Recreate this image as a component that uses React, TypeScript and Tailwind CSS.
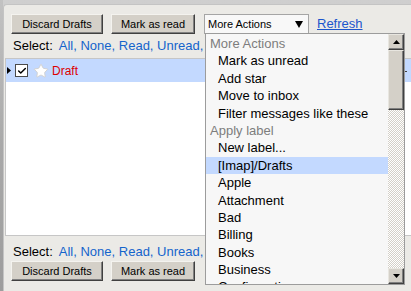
import { Check, Star } from "lucide-react";

const btn =
  "h-[20px] bg-[#d4d0c8] border border-t-[#f4f3ef] border-l-[#f4f3ef] border-b-[#404040] border-r-[#404040] shadow-[inset_-1px_-1px_0_#808080] text-[11px] text-black leading-[18px] flex items-center justify-center";

const links = ["All", "None", "Read", "Unread"];

const menu: { label: string; kind: "head" | "item" | "sel" }[] = [
  { label: "More Actions", kind: "head" },
  { label: "Mark as unread", kind: "item" },
  { label: "Add star", kind: "item" },
  { label: "Move to inbox", kind: "item" },
  { label: "Filter messages like these", kind: "item" },
  { label: "Apply label", kind: "head" },
  { label: "New label...", kind: "item" },
  { label: "[Imap]/Drafts", kind: "sel" },
  { label: "Apple", kind: "item" },
  { label: "Attachment", kind: "item" },
  { label: "Bad", kind: "item" },
  { label: "Billing", kind: "item" },
  { label: "Books", kind: "item" },
  { label: "Business", kind: "item" },
  { label: "Configuration", kind: "item" },
];

function Buttons() {
  return (
    <div className="flex gap-[8px] ml-[7px]">
      <button className={`${btn} w-[92px]`}>Discard Drafts</button>
      <button className={`${btn} w-[84px]`}>Mark as read</button>
    </div>
  );
}

function SelectLine({ pad }: { pad: string }) {
  return (
    <div className={`h-[24px] ${pad} ml-[9px] text-[13px] leading-[15px] text-black whitespace-nowrap`}>
      Select:
      <span className="ml-[6px]" />
      {links.map((l, i) => (
        <span key={l}>
          <span className="text-[#1464cc]">{l},</span>
          {i < links.length - 1 ? " " : ""}
        </span>
      ))}
    </div>
  );
}

function ScrollBtn({ up }: { up: boolean }) {
  return (
    <div className="w-[16px] h-[16px] bg-[#d4d0c8] border border-t-[#e8e6e0] border-l-[#e8e6e0] border-b-[#404040] border-r-[#404040] shadow-[inset_-1px_-1px_0_#808080] flex items-center justify-center">
      <svg width="7" height="4" viewBox="0 0 7 4">
        <path d={up ? "M3.5 0 L7 4 L0 4 Z" : "M0 0 L7 0 L3.5 4 Z"} fill="#000" />
      </svg>
    </div>
  );
}

export default function App() {
  return (
    <div className="w-[411px] h-[291px] overflow-hidden flex bg-gradient-to-b from-[#cfcfcf] to-[#bdbdbd] font-['Liberation_Sans',Arial,sans-serif] relative">
      <div className="w-[3px] h-full bg-gradient-to-b from-[#c2c2c2] via-[#a9a9a9] to-[#9d9d9d]" />
      <div className="flex-1 mt-[4px] bg-[#ebeae6] border-l border-t border-[#c4c4c4] rounded-tl-[4px] pt-[9px] flex flex-col">
        <div className="flex items-center h-[20px]">
          <Buttons />
          <div className="ml-[9px] w-[105px] h-[20px] bg-[#f8f8f8] border border-[#a5a5a5] flex items-center pl-[3px] pr-[5px] text-[11px] text-black">
            <span className="flex-1">More Actions</span>
            <svg width="8" height="7" viewBox="0 0 8 7">
              <path d="M0 0 L8 0 L4 7 Z" fill="#000" />
            </svg>
          </div>
          <span className="ml-[8px] text-[13px] text-[#1b55cc] underline">Refresh</span>
        </div>
        <SelectLine pad="pt-[4px]" />
        <div className="ml-[1px] h-[178px] bg-white border-t border-b border-l border-[#c6c6c6]">
          <div className="h-[23px] bg-[#c3d9ff] flex items-center">
            <svg width="4" height="7" viewBox="0 0 4 7" className="ml-[1px] mt-[-1px]">
              <path d="M0 0 L4 3.5 L0 7 Z" fill="#000" />
            </svg>
            <div className="ml-[4px] w-[13px] h-[13px] bg-white border border-[#4a4a4a] flex items-center justify-center">
              <Check size={10} strokeWidth={3.5} color="#000" />
            </div>
            <Star size={16} className="ml-[5px]" fill="#fff" color="#d2d2d2" strokeWidth={1.5} />
            <span className="ml-[3px] text-[12px] text-[#dd0000]">Draft</span>
          </div>
        </div>
        <SelectLine pad="pt-[8px] h-[25px]" />
        <Buttons />
      </div>

      <div className="absolute left-[205px] top-[33px] w-[200px] h-[252px] bg-[#f7f7f7] border border-[#9c9c9c] flex">
        <div className="flex-1 pt-[1px] overflow-hidden">
          {menu.map((m) => (
            <div
              key={m.label}
              className={`h-[17.4px] leading-[17.4px] text-[13px] whitespace-nowrap ${
                m.kind === "head"
                  ? "pl-[4px] text-[#7d7d7d]"
                  : m.kind === "sel"
                  ? "pl-[12px] bg-[#c3d9ff] text-black"
                  : "pl-[12px] text-black"
              }`}
            >
              {m.label}
            </div>
          ))}
        </div>
        <div className="w-[16px] flex flex-col bg-[repeating-conic-gradient(#d4d0c8_0_25%,#ffffff_0_50%)] bg-[length:2px_2px]">
          <ScrollBtn up />
          <div className="h-[60px] bg-[#d4d0c8] border border-t-[#e8e6e0] border-l-[#e8e6e0] border-b-[#404040] border-r-[#404040] shadow-[inset_-1px_-1px_0_#808080]" />
          <div className="flex-1" />
          <ScrollBtn up={false} />
        </div>
      </div>
      <div className="absolute left-[405px] top-[71px] w-[2px] h-[1px] bg-[#404040]" />
    </div>
  );
}
